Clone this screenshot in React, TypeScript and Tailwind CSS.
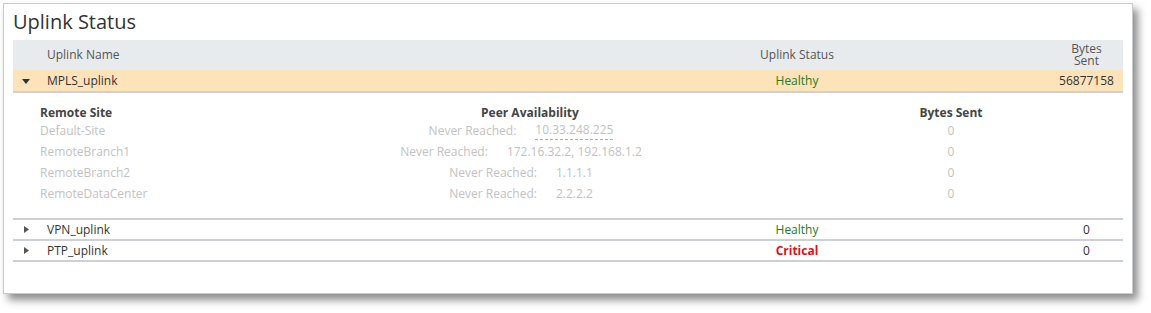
export default function App() {
  const sites = [
    { name: 'Default-Site', peers: '10.33.248.225', dotted: true, bytes: '0' },
    { name: 'RemoteBranch1', peers: '172.16.32.2, 192.168.1.2', dotted: false, bytes: '0' },
    { name: 'RemoteBranch2', peers: '1.1.1.1', dotted: false, bytes: '0' },
    { name: 'RemoteDataCenter', peers: '2.2.2.2', dotted: false, bytes: '0' },
  ];

  const collapsed = [
    { name: 'VPN_uplink', status: 'Healthy', bytes: '0' },
    { name: 'PTP_uplink', status: 'Critical', bytes: '0' },
  ];

  return (
    <div className="w-[1151px] h-[313px] bg-white pt-[3px] pl-[3px] font-['Open_Sans',sans-serif]">
      <div className="w-[1130px] h-[291px] border border-[#c6cacd] bg-white shadow-[5px_6px_8px_rgba(0,0,0,0.45)] pl-[9px] pr-[9px]">
        {/* Title */}
        <div className="h-[36px] pt-[5px] text-[20px] leading-[26px] text-[#333]">Uplink Status</div>

        {/* Table header */}
        <div className="flex items-center h-[30px] bg-[#e8ebee] text-[12px] text-[#555]">
          <div className="w-[34px]" />
          <div className="w-[650px]">Uplink Name</div>
          <div className="w-[200px] text-center">Uplink Status</div>
          <div className="w-[154px]" />
          <div className="w-[71px] text-center leading-[12px]">
            Bytes
            <br />
            Sent
          </div>
        </div>

        {/* Expanded row */}
        <div className="flex items-center h-[23px] pt-[1px] bg-[#fde3b9] border-b-2 border-[#cdd1d4] text-[12px] text-[#333]">
          <div className="w-[34px] pl-[9px]">
            <svg width="8" height="5" viewBox="0 0 8 5" className="block">
              <polygon points="0,0 8,0 4,5" fill="#333" />
            </svg>
          </div>
          <div className="w-[650px]">MPLS_uplink</div>
          <div className="w-[200px] text-center text-[#267a1e]">Healthy</div>
          <div className="w-[154px]" />
          <div className="w-[71px] text-center">56877158</div>
        </div>

        {/* Sub table */}
        <div className="pl-[27px] pt-[12px] pb-[14px] border-b-2 border-[#cdd1d4] text-[12px]">
          <div className="flex h-[15px] items-center font-bold text-[#444]">
            <div className="w-[340px]">Remote Site</div>
            <div className="w-[300px] text-center">Peer Availability</div>
            <div className="w-[171px]" />
            <div className="w-[200px] text-center">Bytes Sent</div>
          </div>
          {sites.map(s => (
            <div key={s.name} className="flex h-[21px] items-center text-[#c2c2c2]">
              <div className="w-[340px]">{s.name}</div>
              <div className="w-[300px] flex justify-center pr-[18px]">
                <span>Never Reached:</span>
                <span
                  className={`ml-[19px] ${s.dotted ? 'border-b border-dashed border-[#b0b0b0] leading-[15px]' : ''}`}
                >
                  {s.peers}
                </span>
              </div>
              <div className="w-[171px]" />
              <div className="w-[200px] text-center">{s.bytes}</div>
            </div>
          ))}
        </div>

        {/* Collapsed rows */}
        {collapsed.map(r => (
          <div
            key={r.name}
            className="flex items-center h-[21px] border-b-2 border-[#cdd1d4] text-[12px] text-[#333]"
          >
            <div className="w-[34px] pl-[11px]">
              <svg width="5" height="7" viewBox="0 0 5 7" className="block">
                <polygon points="0,0 5,3.5 0,7" fill="#555" />
              </svg>
            </div>
            <div className="w-[650px]">{r.name}</div>
            <div
              className={`w-[200px] text-center ${
                r.status === 'Critical' ? 'text-[#e0101a] font-bold' : 'text-[#267a1e]'
              }`}
            >
              {r.status}
            </div>
            <div className="w-[154px]" />
            <div className="w-[71px] text-center">{r.bytes}</div>
          </div>
        ))}
      </div>
    </div>
  );
}
